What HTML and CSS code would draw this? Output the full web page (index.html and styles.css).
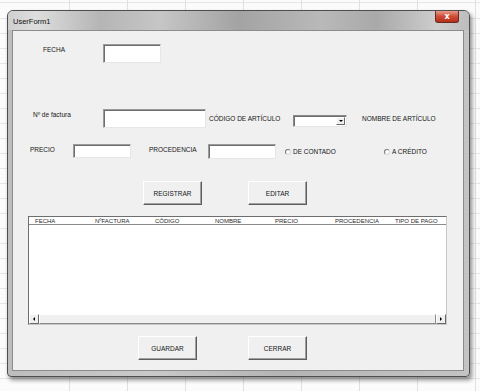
FILE: index.html
```html
<!DOCTYPE html>
<html lang="es">

<head>
    <meta charset="UTF-8">
    <meta name="viewport" content="width=device-width, initial-scale=1.0">
    <title>UserForm1</title>
    <link rel="stylesheet" href="styles.css">
</head>

<body>
    <div class="window">
        <div class="titlebar">
            <span class="title">UserForm1</span>
            <button class="close-button">x</button>
        </div>

        <div class="client">
            <!-- Fecha -->
            <div class="row row-fecha">
                <span class="label label-fecha">FECHA</span>
                <div class="textbox tb-fecha"></div>
            </div>

            <!-- Factura / codigo / nombre -->
            <div class="row row-factura">
                <span class="label label-factura">Nº de factura</span>
                <div class="textbox tb-factura"></div>
                <span class="label label-codigo">CÓDIGO DE ARTÍCULO</span>
                <div class="combo">
                    <div class="combo-button"><span class="arrow-down"></span></div>
                </div>
                <span class="label label-nombre">NOMBRE DE ARTÍCULO</span>
            </div>

            <!-- Precio / procedencia / pago -->
            <div class="row row-precio">
                <span class="label label-precio">PRECIO</span>
                <div class="textbox tb-precio"></div>
                <span class="label label-procedencia">PROCEDENCIA</span>
                <div class="textbox tb-procedencia"></div>
                <label class="radio radio-contado"><span class="radio-dot"></span>DE CONTADO</label>
                <label class="radio"><span class="radio-dot"></span>A CRÉDITO</label>
            </div>

            <div class="row row-buttons">
                <button class="btn">REGISTRAR</button>
                <button class="btn">EDITAR</button>
            </div>

            <!-- Lista -->
            <div class="listview">
                <div class="list-header">
                    <span>FECHA</span>
                    <span>NºFACTURA</span>
                    <span>CÓDIGO</span>
                    <span>NOMBRE</span>
                    <span>PRECIO</span>
                    <span>PROCEDENCIA</span>
                    <span>TIPO DE PAGO</span>
                </div>
                <div class="list-body"></div>
                <div class="hscroll">
                    <div class="scroll-btn"><span class="arrow-left"></span></div>
                    <div class="scroll-thumb"></div>
                    <div class="scroll-btn"><span class="arrow-right"></span></div>
                </div>
            </div>

            <div class="row row-bottom">
                <button class="btn">GUARDAR</button>
                <button class="btn">CERRAR</button>
            </div>
        </div>
    </div>
</body>

</html>
```

FILE: styles.css
```css
/* Reset and base styles */
* {
    box-sizing: border-box;
    margin: 0;
    padding: 0;
}

body {
    width: 480px;
    height: 391px;
    overflow: hidden;
    font-family: "Liberation Sans", Arial, sans-serif;
    color: #161616;
    background-color: #fbfbfb;
    background-image:
        repeating-linear-gradient(90deg, transparent 0 57px, #dfe0e1 57px 58px),
        repeating-linear-gradient(180deg, transparent 0 14px, #e4e5e6 14px 15px);
    background-position: 12px 0, 0 4px;
    padding: 10px 0 0 7px;
}

/* Window frame */
.window {
    width: 463px;
    height: 367px;
    border: 1px solid #4e4e4e;
    border-radius: 6px 6px 4px 4px;
    background: linear-gradient(90deg, #bdbdbd, #c9c9c9 30%, #b4b4b4 60%, #c4c4c4);
    box-shadow: 2px 3px 4px rgba(0, 0, 0, 0.45);
    padding: 0 5px 5px 4px;
    display: flex;
    flex-direction: column;
}

.titlebar {
    height: 19px;
    display: flex;
    align-items: center;
    margin: 0 -5px 0 -4px;
    padding: 0 10px 0 5px;
    border-radius: 5px 5px 0 0;
    background: linear-gradient(90deg, #cfcfcf 0%, #dedede 6%, #b5b5b5 20%, #c6c6c6 33%, #a3a3a3 50%, #b9b9b9 68%, #a9a9a9 80%, #cdcdcd 93%, #bdbdbd 100%);
}

.title {
    font-size: 7.5px;
    color: #111;
    padding-top: 1px;
}

.close-button {
    margin-left: auto;
    margin-top: -7px;
    width: 24px;
    height: 12px;
    border: 1px solid #6a2a20;
    border-top: none;
    border-radius: 0 0 3px 3px;
    background: linear-gradient(180deg, #e89a8a, #cf4b36 50%, #b5301c);
    color: #fff;
    font-family: "DejaVu Sans", sans-serif;
    font-size: 8px;
    font-weight: bold;
    line-height: 10px;
}

/* Client area */
.client {
    flex: 1;
    background-color: #f0f0f0;
    border: 1px solid #8c8c8c;
}

.row {
    display: flex;
    align-items: flex-start;
}

.label {
    flex: none;
    font-size: 6.5px;
    line-height: 8px;
    white-space: nowrap;
}

.textbox {
    flex: none;
    background-color: #fff;
    border: 1px solid;
    border-color: #9a9a9a #e6e6e6 #e6e6e6 #9a9a9a;
    box-shadow: inset 1px 1px 0 #6e6e6e;
}

/* Row: fecha */
.row-fecha {
    margin-top: 13px;
    padding-left: 30px;
}

.label-fecha {
    width: 60px;
    padding-top: 2px;
}

.tb-fecha {
    width: 58px;
    height: 19px;
}

/* Row: factura */
.row-factura {
    margin-top: 46px;
    padding-left: 20px;
}

.label-factura {
    width: 70px;
    padding-top: 2px;
}

.tb-factura {
    width: 103px;
    height: 19px;
}

.label-codigo {
    width: 84px;
    margin-left: 3px;
    padding-top: 6px;
}

.combo {
    flex: none;
    width: 54px;
    height: 12px;
    margin-top: 6px;
    background-color: #fff;
    border: 1px solid;
    border-color: #8a8a8a #e6e6e6 #e6e6e6 #8a8a8a;
    box-shadow: inset 1px 1px 0 #6e6e6e;
    display: flex;
    justify-content: flex-end;
    padding: 1px;
}

.combo-button {
    width: 9px;
    background-color: #f0f0f0;
    border: 1px solid;
    border-color: #fff #6a6a6a #6a6a6a #fff;
    display: flex;
    align-items: center;
    justify-content: center;
}

.arrow-down {
    width: 0;
    height: 0;
    border-left: 2px solid transparent;
    border-right: 2px solid transparent;
    border-top: 2px solid #000;
}

.label-nombre {
    margin-left: 15px;
    padding-top: 6px;
}

/* Row: precio */
.row-precio {
    margin-top: 16px;
    padding-left: 17px;
}

.label-precio {
    width: 43px;
    padding-top: 2px;
}

.tb-precio {
    width: 58px;
    height: 14px;
}

.label-procedencia {
    width: 59px;
    margin-left: 18px;
    padding-top: 2px;
}

.tb-procedencia {
    width: 68px;
    height: 15px;
}

.radio {
    display: flex;
    align-items: center;
    gap: 2px;
    font-size: 6.5px;
    line-height: 8px;
    margin-top: 4px;
    white-space: nowrap;
}

.radio-contado {
    width: 99px;
    margin-left: 9px;
}

.radio-dot {
    width: 6px;
    height: 6px;
    border-radius: 50%;
    border: 1px solid;
    border-color: #7a7a7a #d8d8d8 #d8d8d8 #7a7a7a;
    background-color: #fff;
}

/* Buttons */
.btn {
    flex: none;
    width: 59px;
    height: 24px;
    background-color: #f0f0f0;
    border: 1px solid;
    border-color: #fff #5e5e5e #5e5e5e #fff;
    box-shadow: inset -1px -1px 0 #a0a0a0;
    font-family: "Liberation Sans", Arial, sans-serif;
    font-size: 6.5px;
    color: #161616;
}

.row-buttons {
    margin-top: 22px;
    padding-left: 130px;
    gap: 46px;
}

.row-bottom {
    margin-top: 11px;
    padding-left: 125px;
    gap: 51px;
}

/* List view */
.listview {
    width: 419px;
    height: 109px;
    margin: 11px 0 0 15px;
    background-color: #fff;
    border: 1px solid;
    border-color: #6e6e6e #c8c8c8 #c8c8c8 #6e6e6e;
    display: flex;
    flex-direction: column;
}

.list-header {
    height: 8px;
    display: grid;
    grid-template-columns: repeat(6, 60px) 1fr;
    padding-left: 6px;
    border-bottom: 1px solid #8a8a8a;
    font-size: 6px;
    line-height: 8px;
    color: #2a2a2a;
    white-space: nowrap;
}

.list-body {
    flex: 1;
}

.hscroll {
    height: 10px;
    display: flex;
    background-color: #f0f0f0;
}

.scroll-btn {
    width: 10px;
    background-color: #f0f0f0;
    border: 1px solid;
    border-color: #fff #6a6a6a #6a6a6a #fff;
    display: flex;
    align-items: center;
    justify-content: center;
}

.scroll-thumb {
    flex: 1;
    border: 1px solid;
    border-color: #fff #8a8a8a #8a8a8a #fff;
    background-color: #f0f0f0;
}

.arrow-left {
    width: 0;
    height: 0;
    border-top: 2px solid transparent;
    border-bottom: 2px solid transparent;
    border-right: 2px solid #000;
}

.arrow-right {
    width: 0;
    height: 0;
    border-top: 2px solid transparent;
    border-bottom: 2px solid transparent;
    border-left: 2px solid #000;
}
```
